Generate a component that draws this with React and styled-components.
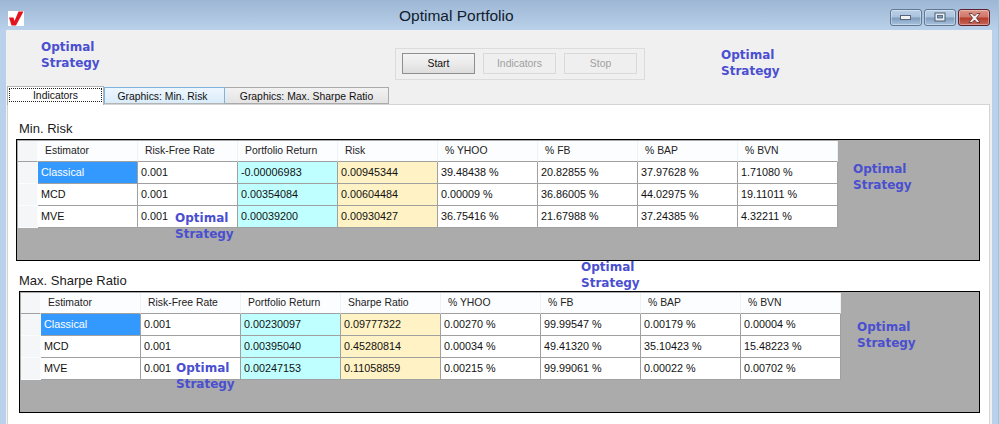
import React from "react";
import styled, { createGlobalStyle } from "styled-components";

const GlobalStyle = createGlobalStyle`
  html, body {
    margin: 0;
    padding: 0;
    background: #b9d1ea;
  }
  body {
    font-family: "Liberation Sans", Arial, sans-serif;
    font-size: 11px;
    color: #111;
  }
`;

const Window = styled.div`
  position: relative;
  width: 999px;
  height: 424px;
  overflow: hidden;
  display: flex;
  flex-direction: column;
  background: linear-gradient(#9db6d3, #b9d1ea 30px);
  border-right: 1px solid #6fd6f2;
  box-sizing: border-box;
`;

const TitleBar = styled.div`
  height: 30px;
  flex: none;
  display: grid;
  grid-template-columns: 384px 1fr auto;
  align-items: center;
  padding: 0 8px 0 8px;
  box-sizing: border-box;
`;

const Logo = styled.svg`
  display: block;
  align-self: start;
  margin-top: 11px;
`;

const Title = styled.div`
  padding-left: 7px;
  padding-top: 2px;
  font-size: 15.5px;
  color: #10202e;
`;

const WindowButtons = styled.div`
  display: flex;
  gap: 2px;
  align-self: start;
  margin-top: 9px;
`;

const WindowButton = styled.div`
  width: 32px;
  height: 17px;
  box-sizing: border-box;
  display: flex;
  align-items: center;
  justify-content: center;
  border: 1px solid ${(p) => (p.$close ? "#5c2030" : "#5f7893")};
  border-radius: 3px;
  box-shadow: inset 0 0 0 1px rgba(255, 255, 255, 0.35);
  background: ${(p) =>
    p.$close
      ? "linear-gradient(#dd9488, #cf7768 48%, #b63a28 52%, #c4685a)"
      : "linear-gradient(#bbd0e6, #a9c2dc 48%, #7f9cbc 52%, #a8c3de)"};
`;

const Body = styled.div`
  flex: 1;
  min-height: 0;
  display: flex;
  flex-direction: column;
  margin: 0 6px 0 6px;
  background: #f0f0f0;
`;

const TopBar = styled.div`
  height: 56px;
  flex: none;
  box-sizing: border-box;
  padding: 18px 0 0 389px;
`;

const ButtonGroup = styled.div`
  width: 250px;
  height: 32px;
  box-sizing: border-box;
  display: flex;
  gap: 8px;
  padding: 4px 0 0 6px;
  border: 1px solid #dcdcdc;
`;

const ActionButton = styled.div`
  width: 73px;
  height: 21px;
  box-sizing: border-box;
  display: flex;
  align-items: center;
  justify-content: center;
  font-size: 10.4px;
  color: ${(p) => (p.$disabled ? "#a0a0a0" : "#111")};
  border: 1px solid ${(p) => (p.$disabled ? "#d9d9d9" : "#8f8f8f")};
  background: ${(p) =>
    p.$disabled ? "#efefef" : "linear-gradient(#f4f4f4, #ebebeb 50%, #dddddd)"};
`;

const TabStrip = styled.div`
  height: 18px;
  flex: none;
  display: flex;
  align-items: flex-end;
  padding-left: 1px;
  position: relative;
  z-index: 1;
`;

const Tab = styled.div`
  box-sizing: border-box;
  width: ${(p) => p.$width}px;
  height: ${(p) => (p.$active ? 19 : 17)}px;
  margin-bottom: ${(p) => (p.$active ? -1 : 0)}px;
  display: flex;
  align-items: center;
  justify-content: center;
  font-size: 10.4px;
  color: #111;
  ${(p) =>
    p.$active
      ? "background: #fff; border: 1px solid #b4b4b4; border-bottom: none; padding: 1px;"
      : ""}
  ${(p) =>
    p.$hover
      ? "background: linear-gradient(#eef6fd, #d9ecfb); border: 1px solid #7eb4e0; border-bottom: 1px solid #b4b4b4; padding: 1px 4px 0 0;"
      : ""}
  ${(p) =>
    !p.$active && !p.$hover
      ? "background: linear-gradient(#f2f2f2, #e3e3e3); border: 1px solid #aaa; border-left: none; padding-top: 1px;"
      : ""}
`;

const FocusBox = styled.div`
  flex: 1;
  align-self: stretch;
  margin-bottom: 2px;
  border: 1px dotted #222;
  display: flex;
  align-items: center;
  justify-content: center;
`;

const Panel = styled.div`
  flex: 1;
  min-height: 0;
  margin: 0 2px 0 1px;
  background: #fff;
  border: 1px solid #d4d4d4;
  border-bottom: none;
  padding: 16px 9px 0 8px;
  box-sizing: border-box;
`;

const Section = styled.section`
  margin-top: ${(p) => p.$top}px;
  padding-left: ${(p) => p.$indent}px;
`;

const SectionTitle = styled.div`
  height: 15px;
  line-height: 15px;
  margin: 0 0 3px ${(p) => p.$labelX}px;
  font-size: 13px;
  color: #1b1b1b;
`;

const GridBox = styled.div`
  height: 122px;
  box-sizing: border-box;
  border: 1px solid #000;
  background: #ababab;
  padding: 1px 0 0 1px;
`;

const Row = styled.div`
  display: grid;
  grid-template-columns: 20px repeat(8, 100px);
  height: ${(p) => (p.$header ? 21 : 22)}px;
`;

const RowHead = styled.div`
  background: #f5f6f8;
  border-right: 1px solid #fafcff;
  border-bottom: 1px solid ${(p) => (p.$header ? "#a0a0a0" : "#fbfdff")};
`;

const HeadCell = styled.div`
  box-sizing: border-box;
  padding-left: 7px;
  line-height: 19px;
  font-size: 10.4px;
  white-space: nowrap;
  background: #fcfdff;
  border-right: 1px solid #eef2f8;
  border-bottom: 1px solid #a0a0a0;
  color: #222;
`;

const CELL_BACKGROUNDS = {
  selected: "#3399ff",
  ret: "#bfffff",
  risk: "#fff2c4",
};

const Cell = styled.div`
  box-sizing: border-box;
  padding-left: 3px;
  line-height: 21px;
  font-size: 10.8px;
  white-space: nowrap;
  background: ${(p) => CELL_BACKGROUNDS[p.$kind] || "#fff"};
  color: ${(p) => (p.$kind === "selected" ? "#fff" : "#111")};
  border-right: 1px solid #a0a0a0;
  border-bottom: 1px solid #a0a0a0;
`;

const Watermark = styled.div`
  position: absolute;
  left: ${(p) => p.$x}px;
  top: ${(p) => p.$y}px;
  font-family: "DejaVu Sans", Verdana, sans-serif;
  font-weight: bold;
  font-size: 12px;
  line-height: 16px;
  color: #4a4fd0;
  z-index: 5;
`;

const minRisk = {
  heads: ["Estimator", "Risk-Free Rate", "Portfolio Return", "Risk", "% YHOO", "% FB", "% BAP", "% BVN"],
  rows: [
    ["Classical", "0.001", "-0.00006983", "0.00945344", "39.48438 %", "20.82855 %", "37.97628 %", "1.71080 %"],
    ["MCD", "0.001", "0.00354084", "0.00604484", "0.00009 %", "36.86005 %", "44.02975 %", "19.11011 %"],
    ["MVE", "0.001", "0.00039200", "0.00930427", "36.75416 %", "21.67988 %", "37.24385 %", "4.32211 %"],
  ],
};

const maxSharpe = {
  heads: ["Estimator", "Risk-Free Rate", "Portfolio Return", "Sharpe Ratio", "% YHOO", "% FB", "% BAP", "% BVN"],
  rows: [
    ["Classical", "0.001", "0.00230097", "0.09777322", "0.00270 %", "99.99547 %", "0.00179 %", "0.00004 %"],
    ["MCD", "0.001", "0.00395040", "0.45280814", "0.00034 %", "49.41320 %", "35.10423 %", "15.48223 %"],
    ["MVE", "0.001", "0.00247153", "0.11058859", "0.00215 %", "99.99061 %", "0.00022 %", "0.00702 %"],
  ],
};

const marks = [
  [41, 39],
  [721, 47],
  [853, 161],
  [175, 210],
  [581, 259],
  [857, 319],
  [176, 360],
];

function cellKind(rowIndex, colIndex) {
  if (rowIndex === 0 && colIndex === 0) return "selected";
  if (colIndex === 2) return "ret";
  if (colIndex === 3) return "risk";
  return undefined;
}

function DataGrid({ data }) {
  return (
    <GridBox>
      <Row $header>
        <RowHead $header />
        {data.heads.map((h) => (
          <HeadCell key={h}>{h}</HeadCell>
        ))}
      </Row>
      {data.rows.map((row, r) => (
        <Row key={row[0]}>
          <RowHead />
          {row.map((value, c) => (
            <Cell key={c} $kind={cellKind(r, c)}>
              {value}
            </Cell>
          ))}
        </Row>
      ))}
    </GridBox>
  );
}

export default function App() {
  return (
    <>
      <GlobalStyle />
      <Window>
        <TitleBar>
          <Logo width="16" height="15" viewBox="0 0 16 15">
            <rect width="16" height="15" fill="#fff" />
            <path d="M1 6.5 L5.5 6.5 L6.5 10 L10.5 0.5 L15.5 0.5 L8 14.5 L3.5 14.5 Z" fill="#e2141f" />
          </Logo>
          <Title>Optimal Portfolio</Title>
          <WindowButtons>
            <WindowButton>
              <svg width="12" height="6" viewBox="0 0 12 6">
                <rect x="0.5" y="0.5" width="10" height="4" fill="#f2f2f2" stroke="#56657a" />
              </svg>
            </WindowButton>
            <WindowButton>
              <svg width="12" height="11" viewBox="0 0 12 11">
                <rect x="1" y="1" width="10" height="8" fill="#e8eef4" stroke="#4c5c70" />
                <rect x="3.5" y="3.5" width="5" height="2.5" fill="#7f9cbc" stroke="#4c5c70" strokeWidth="0.8" />
              </svg>
            </WindowButton>
            <WindowButton $close>
              <svg width="13" height="10" viewBox="0 0 13 10">
                <path
                  d="M1 0.5 H4 L6.5 3 L9 0.5 H12 L8.5 5 L12 9.5 H9 L6.5 7 L4 9.5 H1 L4.5 5 Z"
                  fill="#eee"
                  stroke="#5c2a2a"
                  strokeWidth="0.8"
                />
              </svg>
            </WindowButton>
          </WindowButtons>
        </TitleBar>
        <Body>
          <TopBar>
            <ButtonGroup>
              <ActionButton>Start</ActionButton>
              <ActionButton $disabled>Indicators</ActionButton>
              <ActionButton $disabled>Stop</ActionButton>
            </ButtonGroup>
          </TopBar>
          <TabStrip>
            <Tab $active $width={97}>
              <FocusBox>Indicators</FocusBox>
            </Tab>
            <Tab $hover $width={121}>
              Graphics: Min. Risk
            </Tab>
            <Tab $width={164}>Graphics: Max. Sharpe Ratio</Tab>
          </TabStrip>
          <Panel>
            <Section $top={0} $indent={0}>
              <SectionTitle $labelX={3}>Min. Risk</SectionTitle>
              <DataGrid data={minRisk} />
            </Section>
            <Section $top={12} $indent={3}>
              <SectionTitle $labelX={0}>Max. Sharpe Ratio</SectionTitle>
              <DataGrid data={maxSharpe} />
            </Section>
          </Panel>
        </Body>
        {marks.map(([x, y]) => (
          <Watermark key={`${x}-${y}`} $x={x} $y={y}>
            Optimal
            <br />
            Strategy
          </Watermark>
        ))}
      </Window>
    </>
  );
}
